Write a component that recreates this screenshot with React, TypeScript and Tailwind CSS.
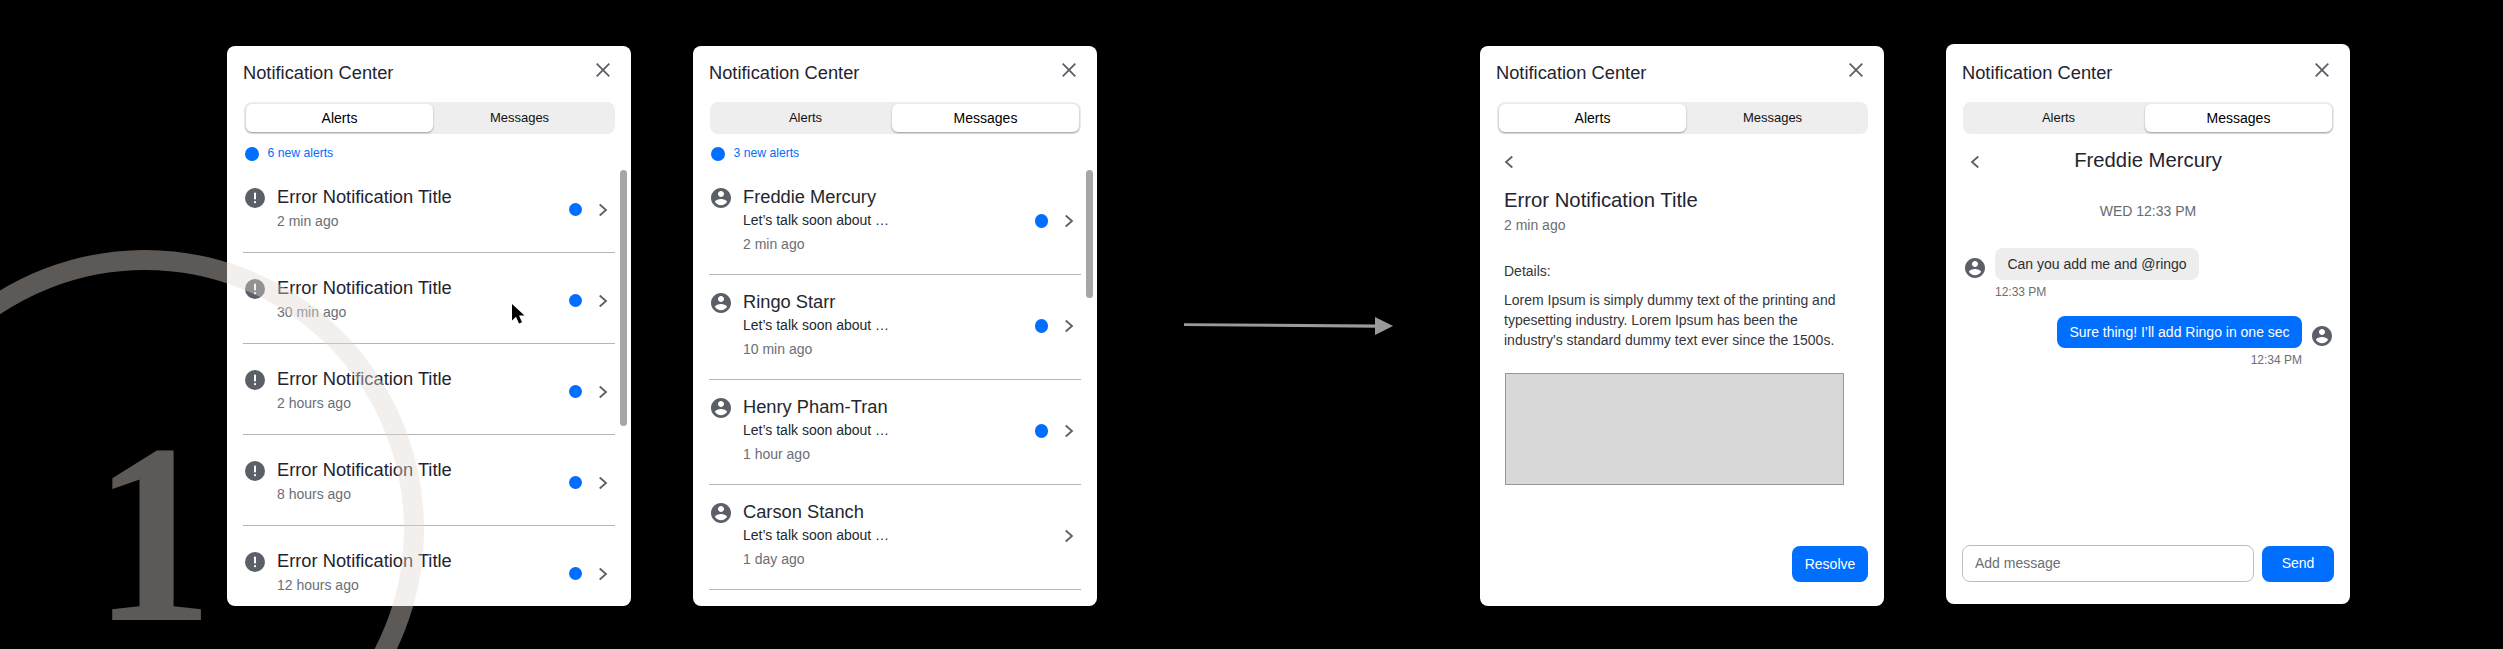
import React from "react";

const sans = "font-['Liberation_Sans',Arial,sans-serif]";

const CloseIcon = () => (
  <svg width="14" height="14" viewBox="0 0 14 14" fill="none" stroke="#5b5f67" strokeWidth="1.8">
    <path d="M0.7 0.7L13.3 13.3M13.3 0.7L0.7 13.3" />
  </svg>
);

const Chevron = ({ left }: { left?: boolean }) => (
  <svg width="16" height="16" viewBox="0 0 16 16" fill="none" stroke="#5b5f67" strokeWidth="1.8" className="shrink-0">
    <path d={left ? "M11.3 2.5L5 8l6.3 5.5" : "M4.7 2.5L11 8l-6.3 5.5"} />
  </svg>
);

const AlertIcon = () => (
  <svg width="20" height="20" viewBox="0 0 20 20" className="shrink-0">
    <circle cx="10" cy="10" r="10" fill="#5b5f67" />
    <rect x="9" y="4.5" width="2" height="7" rx="0.8" fill="#fff" />
    <rect x="9" y="13" width="2" height="2.2" rx="0.8" fill="#fff" />
  </svg>
);

const UserIcon = () => (
  <svg width="20" height="20" viewBox="2 2 20 20" className="shrink-0">
    <path
      fill="#5b5f67"
      d="M12 2C6.48 2 2 6.48 2 12s4.48 10 10 10 10-4.48 10-10S17.52 2 12 2zm0 3c1.66 0 3 1.34 3 3s-1.34 3-3 3-3-1.34-3-3 1.34-3 3-3zm0 14.2c-2.5 0-4.71-1.28-6-3.22.03-1.99 4-3.08 6-3.08 1.99 0 5.97 1.09 6 3.08-1.29 1.94-3.5 3.22-6 3.22z"
    />
  </svg>
);

const Dot = () => <span className="h-[13.5px] w-[13.5px] shrink-0 rounded-full bg-[#006eff]" />;

const Tabs = ({ active }: { active: "alerts" | "messages" }) => {
  const on = "relative z-10 rounded-[6px] bg-white text-[14px] text-black shadow-[0_1px_2px_rgba(0,0,0,0.35)]";
  const off = "text-[13px] text-[#111]";
  return (
    <div className="mx-[17px] mt-[17px] flex h-[32px] w-[371px] rounded-[8px] bg-[#eeeeee] p-[2px]">
      <div className={`flex h-[28px] w-[187px] items-center justify-center ${active === "alerts" ? on : off}`}>Alerts</div>
      <div className={`-ml-[7px] flex h-[28px] w-[187px] items-center justify-center ${active === "messages" ? on : off}`}>Messages</div>
    </div>
  );
};

const Panel = ({ active, shift, children }: { active: "alerts" | "messages"; shift?: boolean; children: React.ReactNode }) => (
  <div className={`relative flex h-[560px] w-[404px] shrink-0 flex-col overflow-hidden rounded-[8px] bg-white ${shift ? "-mt-[2px] pt-[17px]" : "pt-[15px]"}`}>
    <div className="flex h-[24px] items-start justify-between pl-4 pr-[21px]">
      <span className="text-[18.3px] leading-[24px] text-[#1f2430]">Notification Center</span>
      <span className="mt-[2px]">
        <CloseIcon />
      </span>
    </div>
    <Tabs active={active} />
    {children}
  </div>
);

const NewCount = ({ text }: { text: string }) => (
  <div className="ml-[18px] mt-[13px] flex h-[14px] items-center gap-[9px]">
    <Dot />
    <span className="-mt-[2px] text-[12.2px] leading-[14px] text-[#006eff]">{text}</span>
  </div>
);

const Scrollbar = ({ height }: { height: string }) => (
  <div className={`absolute left-[393px] top-[124px] w-[7px] rounded-full bg-[#a6a6a6] ${height}`} />
);

const alerts = ["2 min ago", "30 min ago", "2 hours ago", "8 hours ago", "12 hours ago"];

const AlertsList = () => (
  <>
    <NewCount text="6 new alerts" />
    <Scrollbar height="h-[256px]" />
    <div className="mx-4 mt-px">
      {alerts.map((time) => (
        <div key={time} className="flex h-[91px] shrink-0 items-start border-b border-[#b5b5b5] pl-[2px] pr-[4px] pt-[23px]">
          <span className="mt-[3px] mr-[12px]">
            <AlertIcon />
          </span>
          <div className="flex-1">
            <div className="text-[18.3px] leading-[24px] text-[#1f2430]">Error Notification Title</div>
            <div className="mt-[2px] text-[14px] leading-[20px] text-[#6b6e75]">{time}</div>
          </div>
          <div className="mt-[17px] flex items-center gap-[13px]">
            <Dot />
            <Chevron />
          </div>
        </div>
      ))}
    </div>
  </>
);

const people = [
  { name: "Freddie Mercury", time: "2 min ago", unread: true },
  { name: "Ringo Starr", time: "10 min ago", unread: true },
  { name: "Henry Pham-Tran", time: "1 hour ago", unread: true },
  { name: "Carson Stanch", time: "1 day ago", unread: false },
];

const MessagesList = () => (
  <>
    <NewCount text="3 new alerts" />
    <Scrollbar height="h-[128px]" />
    <div className="mx-4 mt-[9px]">
      {people.map((p) => (
        <div key={p.name} className="flex h-[105px] items-start border-b border-[#b5b5b5] pl-[2px] pr-[4px] pt-[15px]">
          <span className="mt-[3px] mr-[12px]">
            <UserIcon />
          </span>
          <div className="flex-1">
            <div className="text-[18.3px] leading-[24px] text-[#24272e]">{p.name}</div>
            <div className="mt-[2px] text-[14px] leading-[18px] text-[#24272e]">Let’s talk soon about …</div>
            <div className="mt-[5px] text-[14px] leading-[20px] text-[#6b6e75]">{p.time}</div>
          </div>
          <div className="mt-[28px] flex items-center gap-[13px]">
            {p.unread && <Dot />}
            <Chevron />
          </div>
        </div>
      ))}
    </div>
  </>
);

const AlertDetail = () => (
  <div className="flex flex-1 flex-col pl-[24px] pr-4">
    <div className="-ml-[3px] mt-[20px] h-[16px]">
      <Chevron left />
    </div>
    <div className="mt-[17px] text-[20.3px] leading-[26px] text-[#1f2430]">Error Notification Title</div>
    <div className="mt-[2px] text-[14px] leading-[20px] text-[#6b6e75]">2 min ago</div>
    <div className="mt-[26px] text-[14px] leading-[20px] text-[#33363c]">Details:</div>
    <p className="mt-[9px] w-[345px] text-[14px] leading-[20px] text-[#33363c]">
      Lorem Ipsum is simply dummy text of the printing and typesetting industry. Lorem Ipsum has been the industry's standard dummy text ever since the 1500s.
    </p>
    <div className="ml-px mt-[23px] h-[112px] w-[339px] border border-[#979797] bg-[#d8d8d8]" />
    <button className="ml-auto mt-[61px] h-[36px] w-[76px] rounded-[8px] bg-[#006eff] text-[14px] text-white">Resolve</button>
  </div>
);

const MessageDetail = () => (
  <div className="flex flex-1 flex-col">
    <div className="relative mt-[11px] flex h-[30px] items-center justify-center">
      <span className="absolute left-[21px] top-[9px]">
        <Chevron left />
      </span>
      <span className="text-[20.3px] leading-[30px] text-[#1f2430]">Freddie Mercury</span>
    </div>
    <div className="mt-[26px] text-center text-[14px] leading-[20px] text-[#666a70]">WED 12:33 PM</div>
    <div className="ml-[19px] mt-[27px] flex items-end gap-[10px]">
      <span className="mb-[2px]">
        <UserIcon />
      </span>
      <div className="flex h-[32px] w-[204px] items-center justify-center rounded-[8px] bg-[#ededed] text-[14px] text-[#2a2d33]">
        Can you add me and @ringo
      </div>
    </div>
    <div className="ml-[49px] mt-[4px] text-[12px] leading-[16px] text-[#6b6e75]">12:33 PM</div>
    <div className="mr-[18px] mt-[16px] flex items-end justify-end gap-[10px]">
      <div className="flex h-[32px] w-[245px] items-center justify-center rounded-[8px] bg-[#006eff] text-[14px] text-white">
        Sure thing! I’ll add Ringo in one sec
      </div>
      <span className="mb-[2px]">
        <UserIcon />
      </span>
    </div>
    <div className="mr-[48px] mt-[4px] text-right text-[12px] leading-[16px] text-[#6b6e75]">12:34 PM</div>
    <div className="mt-auto mb-[22px] flex items-center gap-[8px] px-[16px]">
      <div className="flex h-[37px] w-[292px] items-center rounded-[8px] border-[1.5px] border-[#bdbdbd] pl-[12px] text-[14px] text-[#6b6e75]">
        Add message
      </div>
      <button className="h-[36px] w-[72px] rounded-[8px] bg-[#006eff] text-[14px] text-white">Send</button>
    </div>
  </div>
);

const Arrow = () => (
  <div className="flex w-[383px] shrink-0 items-start justify-center pt-[270px]">
    <svg width="210" height="20" viewBox="0 0 210 20">
      <path d="M0 7.3L192 8.4v3.4L0 10z" fill="#9a9a9a" />
      <path d="M191 1L209 10L191 19z" fill="#9a9a9a" />
    </svg>
  </div>
);

const Overlay = () => (
  <div className="pointer-events-none absolute inset-0 overflow-hidden">
    <div className="absolute left-[-134px] top-[250px] h-[558px] w-[558px] rounded-full border-[20px] border-[#e1d9d0] opacity-[0.41]" />
    <div className="absolute left-[93px] top-[434px] origin-left scale-x-[0.94] font-['Liberation_Serif',serif] text-[256px] font-bold leading-[200px] text-[#e1d9d0] opacity-[0.41]">
      1
    </div>
  </div>
);

export default function App() {
  return (
    <div className={`relative h-[649px] w-[2503px] overflow-hidden bg-black ${sans}`}>
      <div className="flex items-start gap-[62px] pl-[227px] pt-[46px]">
        <Panel active="alerts">
          <AlertsList />
        </Panel>
        <Panel active="messages">
          <MessagesList />
        </Panel>
        <div className="-mx-[62px]">
          <Arrow />
        </div>
        <Panel active="alerts">
          <AlertDetail />
        </Panel>
        <Panel active="messages" shift>
          <MessageDetail />
        </Panel>
      </div>
      <Overlay />
      <svg width="14" height="22" viewBox="0 0 14 22" className="absolute left-[511px] top-[303px]">
        <path d="M1 1v16.5l4-3.8 3 6.8 3-1.3-3-6.6h5.5z" fill="#000" />
      </svg>
    </div>
  );
}
